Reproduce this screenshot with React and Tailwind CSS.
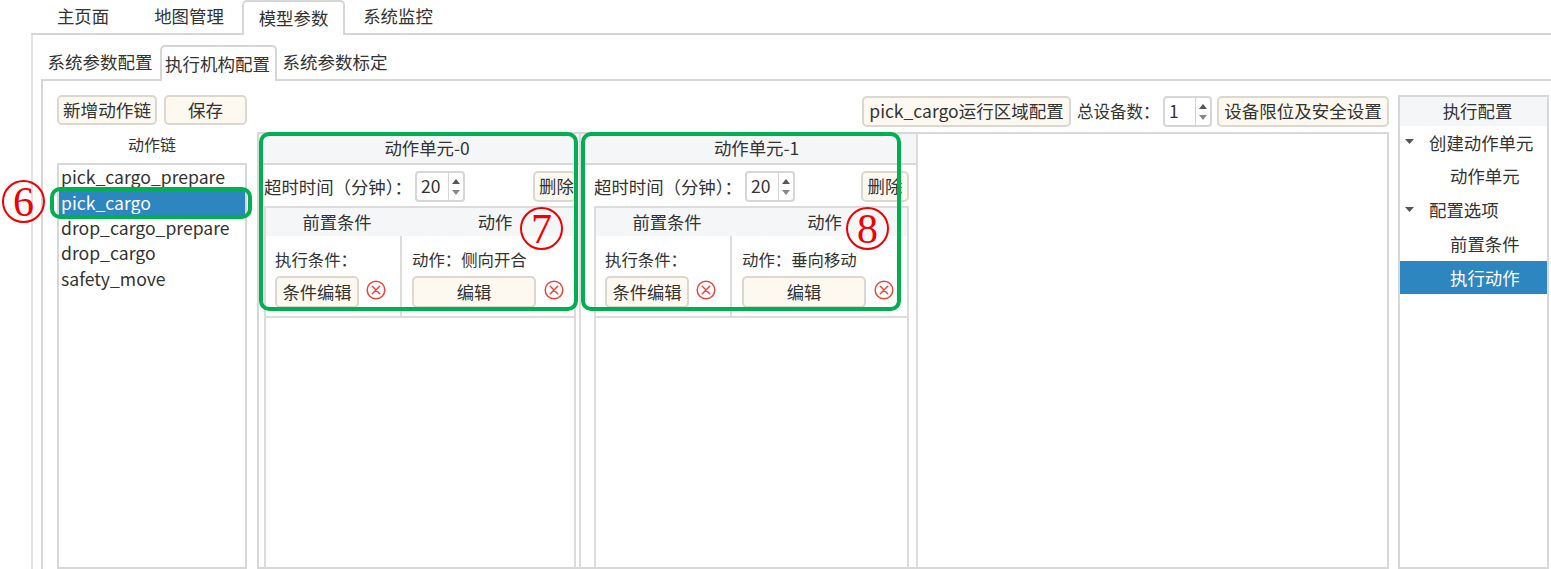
const font = { fontFamily: '"Noto Sans CJK SC", "Noto Sans", sans-serif' };

const chains = ["pick_cargo_prepare", "pick_cargo", "drop_cargo_prepare", "drop_cargo", "safety_move"];

function Btn({ className = "", children }) {
  return (
    <div className={`flex items-center justify-center whitespace-nowrap rounded-[5px] border-2 border-[#dbd8d2] bg-[#fdf9f0] text-[#333] ${className}`}>
      {children}
    </div>
  );
}

function Spin({ value, className = "" }) {
  return (
    <div className={`flex rounded-[4px] border-2 border-[#d6d6d6] bg-white text-[#333] ${className}`}>
      <div className="flex flex-1 items-center pl-[4px] text-[17.5px]">{value}</div>
      <div className="flex w-[15px] flex-col items-center justify-center gap-[6px] border-l border-[#d6d6d6]">
        <svg width="8" height="5" viewBox="0 0 8 5"><path d="M4 0 8 5H0z" fill="#555" /></svg>
        <svg width="8" height="5" viewBox="0 0 8 5"><path d="M0 0h8L4 5z" fill="#888" /></svg>
      </div>
    </div>
  );
}

function CloseIcon() {
  return (
    <svg width="20" height="20" viewBox="0 0 20 20" fill="none" stroke="#e8483c" strokeWidth="1.5" strokeLinecap="round">
      <circle cx="10" cy="10" r="8.8" />
      <path d="M6.3 6.3 13.7 13.7M13.7 6.3 6.3 13.7" />
    </svg>
  );
}

function Unit({ title, action, frame, pad, table, delClass, headShift }) {
  return (
    <div className={`flex h-full shrink-0 flex-col border-r-2 border-[#dcdcdc] ${frame}`}>
      <div className="flex h-[31px] shrink-0 items-center justify-center border-b-2 border-[#d8d8d8] bg-[#f5f6f7] pl-[16px] text-[17.4px] text-[#333]">
        {title}
      </div>
      <div className={`flex flex-1 flex-col ${pad}`}>
        <div className="flex h-[41px] shrink-0 items-center pt-[2px] text-[17.4px] text-[#333]" style={{ width: table }}>
          <span className="w-[151px] whitespace-nowrap pt-[1px]">超时时间（分钟）：</span>
          <Spin value="20" className="h-[31px] w-[50px]" />
          <Btn className={`ml-auto h-[31px] overflow-hidden text-[17.4px] ${delClass}`}>删除</Btn>
        </div>
        <div className="flex flex-1 flex-col border-x-2 border-[#dcdcdc]" style={{ width: table }}>
          <div className="flex h-[112px] shrink-0 flex-col border-t-2 border-b-2 border-[#dcdcdc]">
            <div className="flex h-[28px] shrink-0 bg-[#f5f6f7] text-[17.3px] text-[#333]">
              <div className="flex w-[136px] items-center justify-center pl-[6px]">前置条件</div>
              <div className={`flex flex-1 items-center justify-center ${headShift}`}>动作</div>
            </div>
            <div className="flex flex-1">
              <div className="flex w-[136px] flex-col border-r-2 border-[#dcdcdc] pl-[9px]">
                <div className="flex h-[40px] items-center pt-[6px] text-[16.4px] text-[#333]">执行条件：</div>
                <div className="flex items-start">
                  <Btn className="h-[32px] w-[84px] text-[17.3px]">条件编辑</Btn>
                  <div className="ml-[7px] mt-[4px]"><CloseIcon /></div>
                </div>
              </div>
              <div className="flex flex-1 flex-col pl-[10px]">
                <div className="flex h-[40px] items-center pt-[6px] text-[16.4px] text-[#333]">{action}</div>
                <div className="flex items-start">
                  <Btn className="h-[32px] w-[124px] text-[17.3px]">编辑</Btn>
                  <div className="ml-[8px] mt-[4px]"><CloseIcon /></div>
                </div>
              </div>
            </div>
          </div>
        </div>
      </div>
    </div>
  );
}

function CircleNum({ n, className }) {
  return (
    <div
      className={`absolute flex h-[43px] w-[43px] items-center justify-center rounded-full border-2 border-[#f00000] text-[42px] leading-none text-[#f00000] ${className}`}
      style={{ fontFamily: '"Liberation Serif", serif' }}
    >
      {n}
    </div>
  );
}

export default function App() {
  return (
    <div className="relative flex h-[569px] w-[1551px] flex-col overflow-hidden bg-white pl-[31px]" style={font}>
      {/* top tabs */}
      <div className="flex h-[35px] shrink-0 border-b-2 border-[#d6d6d6] pl-[10px] text-[17.4px] text-[#333]">
        <div className="flex w-[84px] items-center justify-center">主页面</div>
        <div className="ml-[13px] flex w-[102px] items-center justify-center">地图管理</div>
        <div className="ml-[2px] -mb-[2px] flex w-[103px] items-center justify-center rounded-t-[5px] border-2 border-b-0 border-[#d6d6d6] bg-white">模型参数</div>
        <div className="ml-[2px] flex w-[102px] items-center justify-center">系统监控</div>
      </div>

      <div className="flex min-h-0 flex-1 flex-col border-l-2 border-[#e2e2e2] pl-[8px] pt-[10px]">
        {/* sub tabs */}
        <div className="flex h-[36px] shrink-0 border-b-2 border-[#d6d6d6] pl-[1px] text-[17.5px] text-[#333]">
          <div className="flex w-[118px] items-center justify-center whitespace-nowrap pr-[2px]">系统参数配置</div>
          <div className="-mb-[2px] flex w-[117px] items-center justify-center whitespace-nowrap rounded-t-[5px] border-2 border-b-0 border-[#d6d6d6] bg-white pr-[2px]">执行机构配置</div>
          <div className="flex w-[118px] items-center justify-center whitespace-nowrap pr-[2px]">系统参数标定</div>
        </div>

        <div className="flex min-h-0 flex-1 border-l-2 border-[#d6d6d6] pl-[14px] pt-[14px]">
          {/* chain list */}
          <div className="flex h-full w-[190px] shrink-0 flex-col">
            <div className="flex h-[30px] shrink-0 gap-[7px] text-[17.6px]">
              <Btn className="w-[100px]">新增动作链</Btn>
              <Btn className="w-[83px]">保存</Btn>
            </div>
            <div className="flex h-[38px] shrink-0 items-center justify-center text-[16px] text-[#333]">动作链</div>
            <div className="flex-1 border-2 border-[#d8d8d8] text-[17.6px] text-[#333]">
              {chains.map((c, i) => (
                <div key={c} className={`flex h-[25.3px] items-center pl-[2px] ${i === 1 ? "bg-[#2e86c1] text-white" : ""}`}>
                  {c}
                </div>
              ))}
            </div>
          </div>

          {/* units */}
          <div className="ml-[10px] flex h-full w-[1132px] shrink-0 flex-col">
            <div className="flex h-[37px] shrink-0 items-start justify-end pt-[1px] text-[17.5px] text-[#333]">
              <Btn className="h-[31px] w-[209px]">pick_cargo运行区域配置</Btn>
              <div className="ml-[6px] flex h-[31px] w-[86px] items-center text-[16.5px]">总设备数：</div>
              <Spin value="1" className="h-[31px] w-[49px]" />
              <Btn className="ml-[5px] h-[31px] w-[172px]">设备限位及安全设置</Btn>
            </div>
            <div className="flex min-h-0 flex-1 border-2 border-[#d8d8d8]">
              <Unit title="动作单元-0" action="动作：侧向开合" frame="w-[322px]" pad="pl-[5px]" table="312px" delClass="w-[43px] justify-start pl-[4px]" headShift="pl-[14px]" />
              <Unit title="动作单元-1" action="动作：垂向移动" frame="w-[337px]" pad="pl-[13px]" table="315px" delClass="w-[48px]" headShift="pl-[10px]" />
            </div>
          </div>

          {/* right tree */}
          <div className="ml-[9px] flex h-full w-[151px] shrink-0 flex-col border-2 border-[#d8d8d8] text-[17.4px] text-[#333]">
            <div className="flex h-[29px] shrink-0 items-center justify-center bg-[#f5f6f7] pl-[8px]">执行配置</div>
            {[
              { t: "创建动作单元", head: true },
              { t: "动作单元" },
              { t: "配置选项", head: true },
              { t: "前置条件" },
              { t: "执行动作", on: true },
            ].map((r) => (
              <div key={r.t} className={`flex h-[33.7px] shrink-0 items-center whitespace-nowrap ${r.on ? "bg-[#2e86c1] text-white" : ""} ${r.head ? "pl-[5px]" : "pl-[50px]"}`}>
                {r.head && (
                  <svg width="9" height="5" viewBox="0 0 9 5" className="mb-[2px] mr-[15px]"><path d="M0 0h9L4.5 5z" fill="#555" /></svg>
                )}
                {r.t}
              </div>
            ))}
          </div>
        </div>
      </div>

      {/* annotation overlays */}
      <div className="absolute left-[50px] top-[187px] h-[32px] w-[202px] rounded-[10px] border-[4px] border-[#00b050]" />
      <div className="absolute left-[259px] top-[132px] h-[179px] w-[319px] rounded-[10px] border-[4px] border-[#00b050]" />
      <div className="absolute left-[581px] top-[132px] h-[179px] w-[320px] rounded-[10px] border-[4px] border-[#00b050]" />
      <CircleNum n="6" className="left-[2px] top-[180px]" />
      <CircleNum n="7" className="left-[520px] top-[207px]" />
      <CircleNum n="8" className="left-[846px] top-[207px]" />
    </div>
  );
}
